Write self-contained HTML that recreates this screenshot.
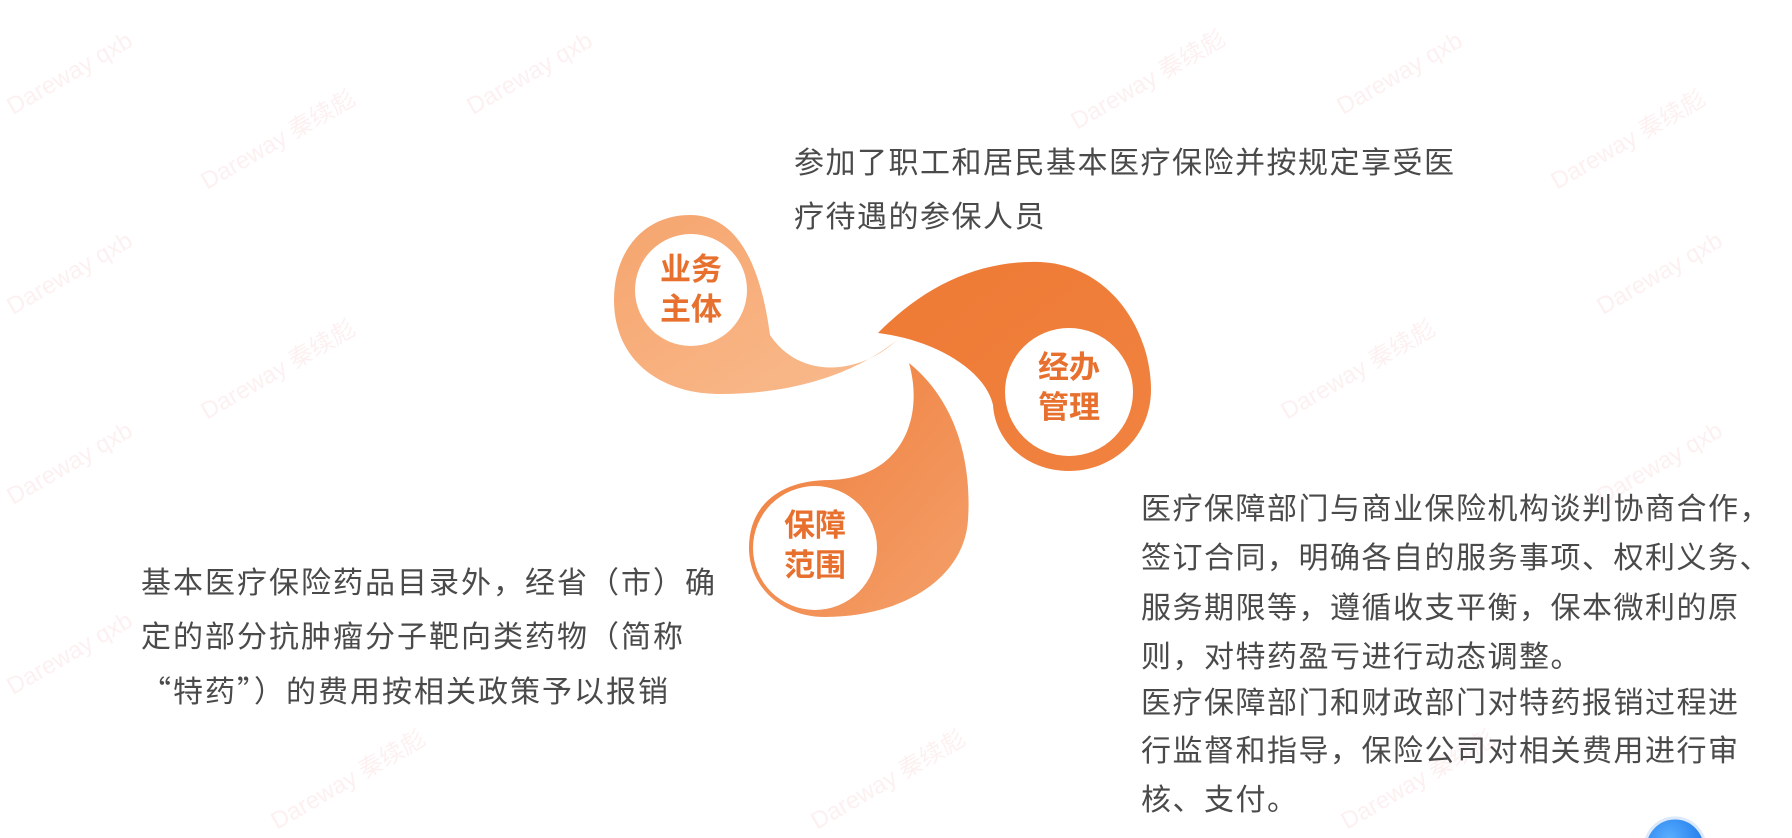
<!DOCTYPE html>
<html><head><meta charset="utf-8">
<style>
html,body{margin:0;padding:0;background:#fff;}
body{width:1792px;height:838px;position:relative;overflow:hidden;font-family:"Liberation Sans","Noto Sans CJK SC",sans-serif;}
.t{position:absolute;color:#4a4a4a;font-size:30px;letter-spacing:1.5px;white-space:nowrap;}
.wm{position:absolute;color:rgba(235,110,110,0.10);font-size:24px;transform:rotate(-30deg);white-space:nowrap;}
.c{position:absolute;color:#e8702f;font-weight:bold;font-size:31px;line-height:40px;text-align:center;width:90px;}
.q{font-family:"Noto Sans CJK SC",sans-serif;}
</style></head><body>
<div class="wm" style="left:0;top:60px">Dareway qxb</div>
<div class="wm" style="left:190px;top:120px">Dareway 秦续彪</div>
<div class="wm" style="left:460px;top:60px">Dareway qxb</div>
<div class="wm" style="left:1060px;top:60px">Dareway 秦续彪</div>
<div class="wm" style="left:1330px;top:60px">Dareway qxb</div>
<div class="wm" style="left:1540px;top:120px">Dareway 秦续彪</div>
<div class="wm" style="left:0;top:260px">Dareway qxb</div>
<div class="wm" style="left:190px;top:350px">Dareway 秦续彪</div>
<div class="wm" style="left:1270px;top:350px">Dareway 秦续彪</div>
<div class="wm" style="left:1590px;top:260px">Dareway qxb</div>
<div class="wm" style="left:0;top:450px">Dareway qxb</div>
<div class="wm" style="left:1590px;top:450px">Dareway qxb</div>
<div class="wm" style="left:0;top:640px">Dareway qxb</div>
<div class="wm" style="left:260px;top:760px">Dareway 秦续彪</div>
<div class="wm" style="left:800px;top:760px">Dareway 秦续彪</div>
<div class="wm" style="left:1330px;top:760px">Dareway 秦续彪</div>

<svg width="1792" height="838" style="position:absolute;left:0;top:0">
<defs>
<linearGradient id="g1" x1="0" y1="0" x2="1" y2="1"><stop offset="0" stop-color="#f6a56e"/><stop offset="1" stop-color="#f9bb8e"/></linearGradient>
<linearGradient id="g2" x1="0" y1="0" x2="1" y2="1"><stop offset="0" stop-color="#ee7a34"/><stop offset="1" stop-color="#f08240"/></linearGradient>
<linearGradient id="g3" x1="0" y1="0" x2="1" y2="1"><stop offset="0" stop-color="#ef7c3a"/><stop offset="1" stop-color="#f4a06a"/></linearGradient>
<radialGradient id="bl" cx="0.4" cy="0.35" r="0.7"><stop offset="0" stop-color="#5ab0ff"/><stop offset="1" stop-color="#1a73e8"/></radialGradient>
</defs>
<path d="M897,340 C860,375 800,380 770,335 C760,260 735,215 690,215 C645,215 614,250 614,300 C614,360 660,394 720,394 C800,394 860,370 897,340 Z" fill="url(#g1)"/>
<circle cx="691" cy="290" r="56" fill="#fff"/>
<path d="M878,333 C925,285 980,260 1040,262 C1110,265 1151,330 1151,390 C1151,435 1115,471 1069,471 C1025,471 995,440 993,405 C985,370 935,340 878,333 Z" fill="url(#g2)"/>
<circle cx="1069" cy="392" r="64" fill="#fff"/>
<path d="M909,363 C955,400 972,460 968,520 C964,580 900,617 825,617 C780,617 749,585 749,548 C749,505 780,480 830,480 C900,478 925,420 909,363 Z" fill="url(#g3)"/>
<circle cx="815" cy="548" r="62" fill="#fff"/>
<circle cx="1675" cy="848" r="30" fill="url(#bl)" stroke="#dbe9fb" stroke-width="3"/>
</svg>

<div class="c" style="left:646px;top:250px">业务<br>主体</div>
<div class="c" style="left:1024px;top:348px">经办<br>管理</div>
<div class="c" style="left:770px;top:506px">保障<br>范围</div>

<div class="t" style="left:794px;top:138px">参加了职工和居民基本医疗保险并按规定享受医</div>
<div class="t" style="left:794px;top:192px">疗待遇的参保人员</div>

<div class="t" style="left:141px;top:558px;letter-spacing:2px">基本医疗保险药品目录外，经省（市）确</div>
<div class="t" style="left:141px;top:612px;letter-spacing:2px">定的部分抗肿瘤分子靶向类药物（简称</div>
<div class="t" style="left:141px;top:667px;letter-spacing:2px"><span class="q">“</span>特药<span class="q">”</span>）的费用按相关政策予以报销</div>

<div class="t" style="left:1141px;top:484px">医疗保障部门与商业保险机构谈判协商合作，</div>
<div class="t" style="left:1141px;top:533px">签订合同，明确各自的服务事项、权利义务、</div>
<div class="t" style="left:1141px;top:583px">服务期限等，遵循收支平衡，保本微利的原</div>
<div class="t" style="left:1141px;top:632px">则，对特药盈亏进行动态调整。</div>
<div class="t" style="left:1141px;top:678px">医疗保障部门和财政部门对特药报销过程进</div>
<div class="t" style="left:1141px;top:726px">行监督和指导，保险公司对相关费用进行审</div>
<div class="t" style="left:1141px;top:775px">核、支付。</div>
</body></html>
